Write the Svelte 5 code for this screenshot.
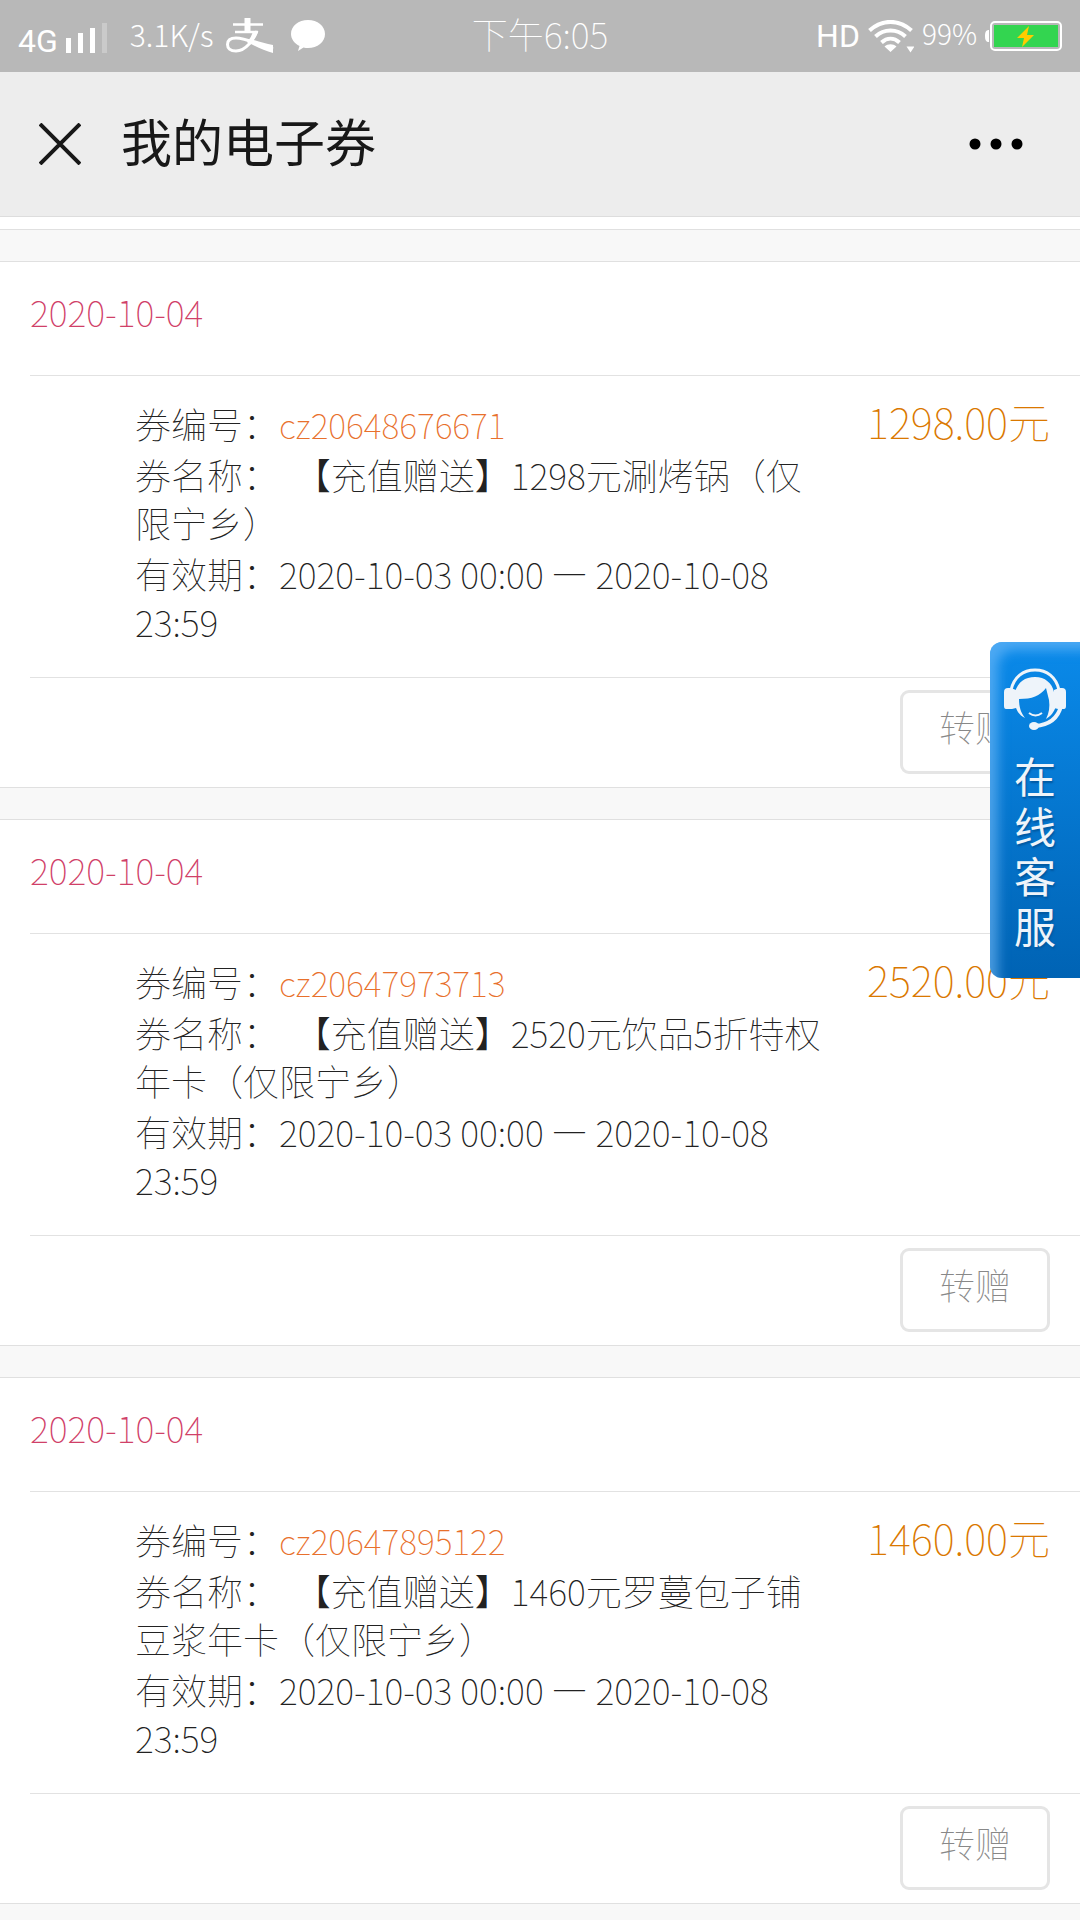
<script lang="ts">
	type Coupon = { date: string; code: string; name: string; price: string; period: string };

	const period = '2020-10-03 00:00 — 2020-10-08 23:59';

	const coupons: Coupon[] = [
		{ date: '2020-10-04', code: 'cz20648676671', name: '【充值赠送】1298元涮烤锅（仅限宁乡）', price: '1298.00', period },
		{ date: '2020-10-04', code: 'cz20647973713', name: '【充值赠送】2520元饮品5折特权年卡（仅限宁乡）', price: '2520.00', period },
		{ date: '2020-10-04', code: 'cz20647895122', name: '【充值赠送】1460元罗蔓包子铺豆浆年卡（仅限宁乡）', price: '1460.00', period }
	];
</script>

<svelte:head><title>我的电子券</title></svelte:head>

<div class="page" lang="zh-CN">
	<div class="status">
		<div class="side">
			<span class="net">4G</span>
			<svg class="signal" width="42" height="30" viewBox="0 0 42 30" fill="#fff" aria-hidden="true">
				<path d="M0 15h5v15H0zM12 10h5v20h-5zM24 5h5v25h-5z" />
				<path d="M36 0h5v30h-5z" opacity=".25" />
			</svg>
			<span class="speed">3.1K/s</span>
			<svg class="pay" width="48" height="36" viewBox="0 0 48 36" fill="none" stroke="#fff" aria-hidden="true">
				<path d="M7 6.500h30" stroke-width="2.500" />
				<path d="M21.500 0v14" stroke-width="6" />
				<path d="M9 14h23" stroke-width="2.500" />
				<path d="M31 13C28 21 20 33 10 33C4 33 1.500 30 1.500 26.500C1.500 22 5 20 10 20C20 20 33 27 47 31" stroke-width="3" />
				<path d="M32 13c-2 6-5 10-8 14l-3-3c3-3 5-7 6-11zM24 21c8 2 15 5 23 6v8c-8-2-16-6-24-10z" fill="#fff" stroke="none" />
			</svg>
			<svg width="34" height="32" viewBox="0 0 34 32" fill="#fff" aria-hidden="true">
				<path d="M17 0C26.500 0 34 6 34 14s-7.500 14-17 14c-1.500 0-3 0-4.500-.5L7 31l1.500-5C3.500 23.500 0 19 0 14C0 6 7.500 0 17 0z" />
			</svg>
		</div>
		<span class="time">下午6:05</span>
		<div class="side right">
			<span class="hd">HD</span>
			<svg width="46" height="33" viewBox="0 0 46 33" fill="none" stroke="#fff" stroke-width="4" aria-hidden="true">
				<path d="M1.500 10.500C14-1 31-1 43.500 10.500M7.500 16.500C16 8.500 29 8.500 37.500 16.500M13.500 22.500C19 17.500 26 17.500 31.500 22.500" />
				<path d="M22.500 32l-6-5.500c3.500-3 8.500-3 12 0zM38.500 26.500h8l-4 6z" fill="#fff" stroke="none" />
			</svg>
			<span class="pct">99%</span>
			<svg width="77" height="30" viewBox="0 0 77 30" aria-hidden="true">
				<path d="M4 9v12c-3 0-4-2-4-6s1-6 4-6z" fill="#fff" />
				<rect x="6" y="1" width="70" height="28" rx="4" fill="none" stroke="#fff" stroke-width="2" />
				<rect x="9" y="4" width="64" height="22" fill="#33d550" />
				<path d="M44 5L32 17h7l-2 9 12-12h-7z" fill="#fc0" />
			</svg>
		</div>
	</div>

	<header class="nav">
		<button class="icon" aria-label="关闭">
			<svg width="42" height="42" viewBox="0 0 42 42" stroke="#181818" stroke-width="4" aria-hidden="true"><path d="M1 1l40 40M41 1L1 41" /></svg>
		</button>
		<h1>我的电子券</h1>
		<button class="icon" aria-label="更多">
			<svg width="54" height="12" viewBox="0 0 54 12" aria-hidden="true"><circle cx="6" cy="6" r="5.500" /><circle cx="27" cy="6" r="5.500" /><circle cx="48" cy="6" r="5.500" /></svg>
		</button>
	</header>

	<main>
		{#each coupons as c}
			<section class="card">
				<div class="date">{c.date}</div>
				<div class="body">
					<div class="info">
						<p>券编号：<span class="code">{c.code}</span></p>
						<p>券名称：&nbsp;&nbsp;{c.name}</p>
						<p>有效期：{c.period}</p>
					</div>
					<div class="price">{c.price}元</div>
				</div>
				<div class="foot"><button class="give">转赠</button></div>
			</section>
		{/each}
	</main>

	<a class="service" href="#service">
		<svg width="62" height="62" viewBox="0 0 62 62" fill="none" stroke="#eef4fa" aria-hidden="true">
			<path d="M7 22C10 9 19 2 31 2s21 7 24 20" stroke-width="3" />
			<path d="M57 38C54 50 45 57 31 58" stroke-width="4" />
			<path d="M11 24C14 14 21 9 31 9s17 6 19 15l2 14c-2 6-5 10-10 13 3-6 4-12 3-19l-3-12c-6 8-14 11-27 11 0 8 2 14 6 19-6-3-9-8-10-14z" fill="#eef4fa" stroke="none" />
			<path d="M7 20l5 2v18l-4 1H2Q0 41 0 38V24Q0 20 4 20zM55 20l-5 2v18l4 1h6Q62 41 62 38V24Q62 20 58 20z" fill="#eef4fa" stroke="none" />
			<path d="M25 45c4 3 9 3 13 0" stroke-width="2" />
			<ellipse cx="30" cy="58" rx="5" ry="4" fill="#eef4fa" stroke="none" />
		</svg>
		<span>在线客服</span>
	</a>
</div>

<style>
	:global(body) { background: #fff; }
	.page { min-height: 100vh; font-family: "Noto Sans CJK SC", sans-serif; font-weight: 100; font-size: 36px; line-height: 48px; color: #222; }
	.status { display: grid; grid-template-columns: 1fr auto 1fr; align-items: center; height: 72px; padding: 0 18px; box-sizing: border-box; background: #b8b8b8; color: #fff; line-height: 40px; }
	.side { display: flex; align-items: center; }
	.side.right { justify-content: flex-end; gap: 8px; }
	.net { font: 400 32px/40px Roboto, sans-serif; padding-top: 10px; }
	.signal { margin: 4px 22px 0 8px; }
	.speed { font-size: 30px; padding-bottom: 4px; font-weight: 300; }
	.pay { margin: 0 17px 0 13px; }
	.time { font-size: 36px; padding-bottom: 6px; }
	.hd { font: 400 32px/40px Roboto, sans-serif; }
	.pct { font-size: 28px; padding-bottom: 6px; font-weight: 300; }
	.nav { display: flex; align-items: center; height: 144px; padding: 0 57px 0 39px; background: #ededed; border-bottom: 1px solid #ddd; }
	.nav h1 { flex: 1; margin: 0 0 0 40px; padding-bottom: 8px; font-size: 51px; line-height: 72px; font-weight: 400; color: #181818; }
	.icon { display: flex; padding: 0; border: 0; background: none; cursor: pointer; }
	main { display: flow-root; margin-top: 12px; padding-bottom: 32px; border-top: 1px solid #e0e0e0; background: #f8f8f8; }
	.card { margin-top: 31px; background: #fff; border: 1px solid #e0e0e0; border-width: 1px 0; }
	.date { padding: 25px 0 40px; margin-left: 30px; color: #d04068; }
	.body { display: flex; justify-content: space-between; margin-left: 30px; padding: 23px 30px 32px 105px; border: 1px solid #e2e2e2; border-width: 1px 0; }
	.info { flex: 0 1 697px; }
	.info p { margin: 0 0 3px; }
	.info p:last-child { margin: 0; }
	.code { color: #e8702c; font-size: 34px; line-height: 1; }
	.price { color: #da7800; font-size: 42px; line-height: 44px; white-space: nowrap; }
	.foot { display: flex; justify-content: flex-end; padding: 12px 30px 13px; }
	.give { height: 84px; width: 150px; padding: 0 0 12px; border: 3px solid #e5e5e5; border-radius: 9px; background: #fff; color: #888; font: inherit; cursor: pointer; }
	.service { position: fixed; right: 0; top: 642px; display: flex; flex-direction: column; align-items: center; width: 90px; padding: 26px 0 28px; box-sizing: border-box; border-radius: 12px 0 0 12px; background: linear-gradient(#0a8aea, #0063b4); box-shadow: inset 12px 12px 12px -4px rgba(120, 190, 250, 0.6); color: #eef4fa; text-decoration: none; }
	.service span { width: 42px; margin-top: 20px; font-size: 42px; line-height: 50px; font-weight: 400; word-break: break-all; text-shadow: 1px 2px 2px #0058a0; }
</style>
